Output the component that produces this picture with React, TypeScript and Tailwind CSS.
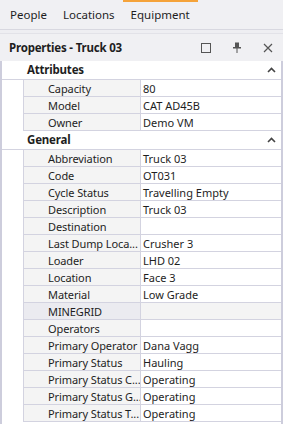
import React from "react";

type Row = { name: string; value: string; special?: boolean };

const attributes: Row[] = [
  { name: "Capacity", value: "80" },
  { name: "Model", value: "CAT AD45B" },
  { name: "Owner", value: "Demo VM" },
];

const general: Row[] = [
  { name: "Abbreviation", value: "Truck 03" },
  { name: "Code", value: "OT031" },
  { name: "Cycle Status", value: "Travelling Empty" },
  { name: "Description", value: "Truck 03" },
  { name: "Destination", value: "" },
  { name: "Last Dump Loca...", value: "Crusher 3" },
  { name: "Loader", value: "LHD 02" },
  { name: "Location", value: "Face 3" },
  { name: "Material", value: "Low Grade" },
  { name: "MINEGRID", value: "", special: true },
  { name: "Operators", value: "" },
  { name: "Primary Operator", value: "Dana Vagg" },
  { name: "Primary Status", value: "Hauling" },
  { name: "Primary Status C...", value: "Operating" },
  { name: "Primary Status G...", value: "Operating" },
  { name: "Primary Status T...", value: "Operating" },
];

function Chevron() {
  return (
    <svg width="9" height="6" viewBox="0 0 9 6" className="mr-[5px]">
      <path d="M1 5 L4.5 1.5 L8 5" fill="none" stroke="#444" strokeWidth="1.6" />
    </svg>
  );
}

function Category({ title }: { title: string }) {
  return (
    <div className="flex h-[19px] items-center justify-between border-b border-[#d3d3e0] pl-[25px] text-[11.5px] font-bold tracking-[-0.2px] text-[#1e1e1e]">
      <span>{title}</span>
      <Chevron />
    </div>
  );
}

function PropRow({ row }: { row: Row }) {
  return (
    <div className="flex h-[17px]">
      <div className="w-[21px] shrink-0 bg-white" />
      <div className="flex flex-1 border-b border-l border-[#d3d3e0]">
        <div
          className={
            "flex w-[117px] shrink-0 items-center overflow-hidden whitespace-nowrap border-r border-[#d3d3e0] pl-[24px] tracking-[-0.1px] text-[#1e1e1e] " +
            (row.special ? "bg-[#ebebf0]" : "bg-[#f4f4f4]")
          }
        >
          {row.name}
        </div>
        <div
          className={
            "flex flex-1 items-center whitespace-nowrap pl-[2px] text-[#1e1e1e] " +
            (row.special ? "bg-[#f4f4f4]" : "bg-white")
          }
        >
          {row.value}
        </div>
      </div>
    </div>
  );
}

export default function App() {
  return (
    <div
      className="flex h-[424px] w-[283px] flex-col overflow-hidden bg-[#eeeef2] text-[11px] leading-none"
      style={{ fontFamily: '"Noto Sans", "Open Sans", sans-serif' }}
    >
      {/* tabs */}
      <div className="flex h-[30px] shrink-0 border-b border-[#d8d8e0] bg-[#f0f0f3] text-[11.5px] text-[#1e1e1e]">
        <div className="flex items-center pl-[10px] pr-[8px] pt-[1px]">People</div>
        <div className="flex items-center px-[8px] pt-[1px]">Locations</div>
        <div className="flex items-center border-t-2 border-[#f5a33a] px-[8px] pb-[1px]">Equipment</div>
      </div>
      <div className="h-[3px] shrink-0" />
      {/* panel header */}
      <div className="flex h-[28px] shrink-0 items-center border-t border-[#e2e2e8] bg-[#f0f0f3] pl-[9px] pr-[10px]">
        <span className="flex-1 text-[11.5px] font-bold tracking-[-0.2px] text-[#1e1e1e]">Properties - Truck 03</span>
        <svg width="10" height="10" viewBox="0 0 10 10" className="mr-[22px]">
          <rect x="0.5" y="0.5" width="9" height="9" fill="none" stroke="#555" strokeWidth="1" />
        </svg>
        <svg width="8" height="11" viewBox="0 0 8 11" className="mr-[22px]">
          <rect x="2" y="0.5" width="4" height="5" fill="#555" />
          <rect x="0" y="5" width="8" height="1.5" fill="#555" />
          <rect x="3.5" y="6" width="1" height="5" fill="#555" />
        </svg>
        <svg width="10" height="10" viewBox="0 0 10 10">
          <path d="M1 1 L9 9 M9 1 L1 9" stroke="#555" strokeWidth="1.2" />
        </svg>
      </div>
      {/* grid */}
      <div className="flex flex-1 flex-col border-l-2 border-r-2 border-[#cdcddc] bg-white">
        <Category title="Attributes" />
        {attributes.map((r) => (
          <PropRow key={r.name} row={r} />
        ))}
        <Category title="General" />
        {general.map((r) => (
          <PropRow key={r.name} row={r} />
        ))}
      </div>
    </div>
  );
}
